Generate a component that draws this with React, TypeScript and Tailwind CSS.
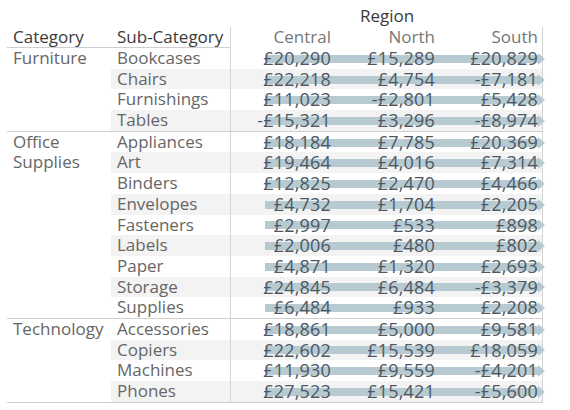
import React from "react";

type Group = { cat: string; rows: string[][] };

const data: Group[] = [
  {
    cat: "Furniture",
    rows: [
      ["Bookcases", "£20,290", "£15,289", "£20,829"],
      ["Chairs", "£22,218", "£4,754", "-£7,181"],
      ["Furnishings", "£11,023", "-£2,801", "£5,428"],
      ["Tables", "-£15,321", "£3,296", "-£8,974"],
    ],
  },
  {
    cat: "Office Supplies",
    rows: [
      ["Appliances", "£18,184", "£7,785", "£20,369"],
      ["Art", "£19,464", "£4,016", "£7,314"],
      ["Binders", "£12,825", "£2,470", "£4,466"],
      ["Envelopes", "£4,732", "£1,704", "£2,205"],
      ["Fasteners", "£2,997", "£533", "£898"],
      ["Labels", "£2,006", "£480", "£802"],
      ["Paper", "£4,871", "£1,320", "£2,693"],
      ["Storage", "£24,845", "£6,484", "-£3,379"],
      ["Supplies", "£6,484", "£933", "£2,208"],
    ],
  },
  {
    cat: "Technology",
    rows: [
      ["Accessories", "£18,861", "£5,000", "£9,581"],
      ["Copiers", "£22,602", "£15,539", "£18,059"],
      ["Machines", "£11,930", "£9,559", "-£4,201"],
      ["Phones", "£27,523", "£15,421", "-£5,600"],
    ],
  },
];

function Row({ r, shaded }: { r: string[]; shaded: boolean }) {
  return (
    <div className={`flex h-[20.7px] ${shaded ? "bg-[#f3f3f3]" : ""}`}>
      <div className="w-[120px] pl-[6px] border-r border-[#d4d4d4] flex items-center text-[#666666] whitespace-nowrap">
        {r[0]}
      </div>
      <div className="relative w-[312px] border-r border-[#d4d4d4] flex text-[18px] tracking-[0.2px]">
        <div className="absolute left-[34px] right-[-3px] top-0 bottom-0 flex items-center pt-[1px]">
          <div className="flex-1 h-[8px] bg-[#b7cad1]" />
          <svg width="7" height="12" viewBox="0 0 7 12" className="block">
            <polygon points="0,0 7,6 0,12" fill="#b7cad1" />
          </svg>
        </div>
        <div className="relative w-[104px] pr-[4px] flex items-center justify-end text-[#4d5863]">{r[1]}</div>
        <div className="relative w-[104px] pr-[4px] flex items-center justify-end text-[#4d5863]">{r[2]}</div>
        <div className="relative w-[103px] pr-[4px] flex items-center justify-end text-[#4d5863]">{r[3]}</div>
      </div>
    </div>
  );
}

export default function App() {
  return (
    <div
      className="w-[570px] h-[410px] bg-white text-[17px] leading-[20.7px] overflow-hidden"
      style={{ fontFamily: '"Open Sans", "Noto Sans", sans-serif' }}
    >
      <div className="h-[27px] flex">
        <div className="w-[231px]" />
        <div className="w-[312px] flex items-center justify-center text-[#3a3a3a] pt-[5px]">Region</div>
      </div>
      <div className="flex pl-[7px] h-[21px]">
        <div className="flex w-[224px] border-b border-[#cfcfcf]">
          <div className="w-[104px] pl-[6px] text-[#3a3a3a] flex items-center">Category</div>
          <div className="w-[120px] pl-[6px] text-[#3a3a3a] border-r border-[#d4d4d4] flex items-center">
            Sub-Category
          </div>
        </div>
        <div className="w-[312px] flex border-r border-[#d4d4d4]">
          <div className="w-[104px] pr-[4px] flex items-center justify-end text-[#777777]">Central</div>
          <div className="w-[104px] pr-[4px] flex items-center justify-end text-[#777777]">North</div>
          <div className="w-[103px] pr-[4px] flex items-center justify-end text-[#777777]">South</div>
        </div>
      </div>
      <div className="ml-[7px] w-[536px]">
        {data.map((g, gi) => (
          <div
            key={g.cat}
            className={`flex ${gi > 0 ? "border-t border-[#cfcfcf]" : ""} ${
              gi === data.length - 1 ? "border-b border-[#cfcfcf]" : ""
            }`}
          >
            <div className="w-[104px] pl-[6px] text-[#666666]">{g.cat}</div>
            <div className="flex flex-col">
              {g.rows.map((r, i) => (
                <Row key={r[0]} r={r} shaded={i % 2 === 1} />
              ))}
            </div>
          </div>
        ))}
      </div>
    </div>
  );
}
